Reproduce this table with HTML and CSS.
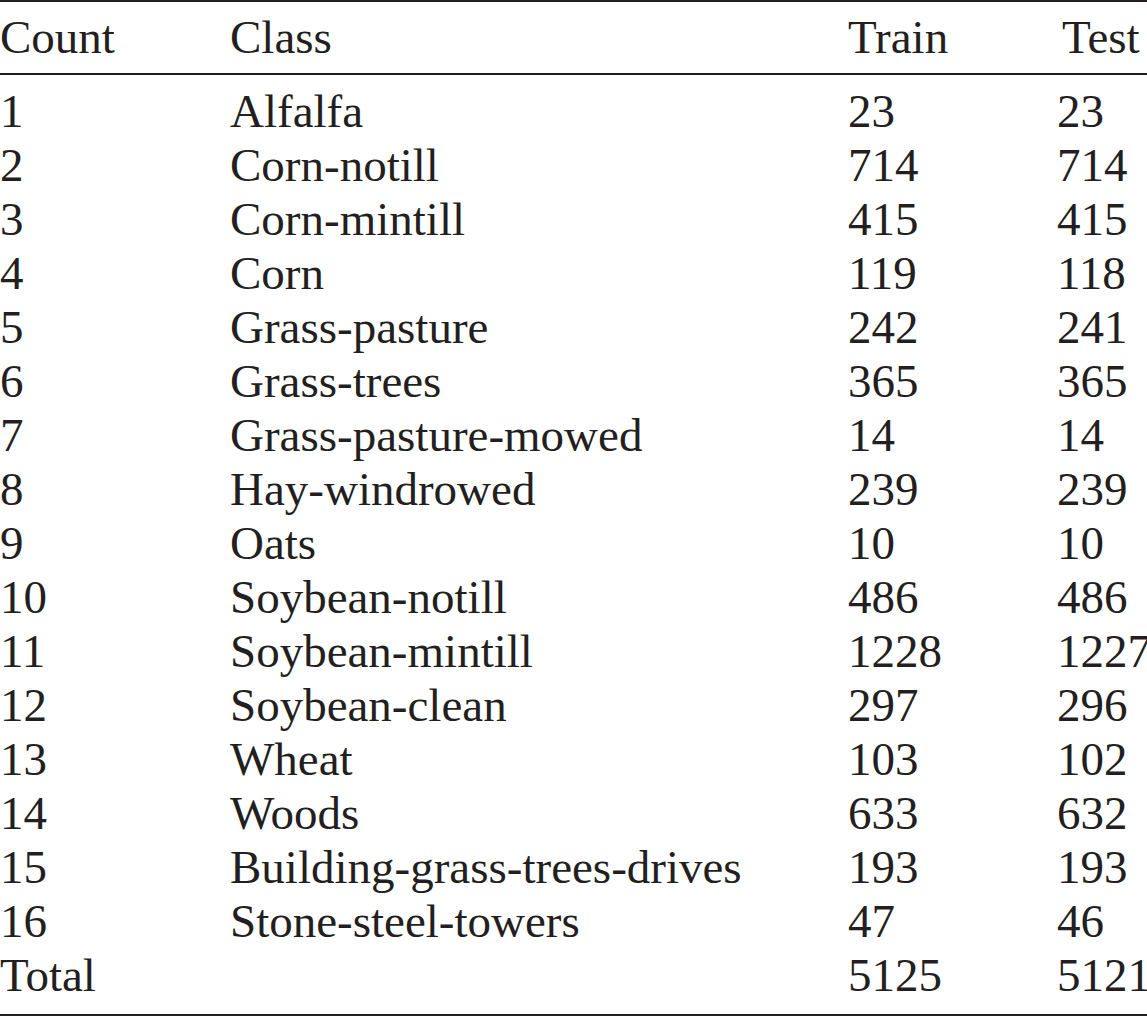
FILE: index.html
```html
<!DOCTYPE html>
<html>
<head>
<meta charset="utf-8">
<link rel="stylesheet" href="styles.css">
</head>
<body>
<table class="data">
  <colgroup>
    <col class="c-count">
    <col class="c-class">
    <col class="c-train">
    <col class="c-test">
  </colgroup>
  <thead>
    <tr><th>Count</th><th>Class</th><th>Train</th><th class="test-head">Test</th></tr>
  </thead>
  <tbody>
    <tr><td>1</td><td>Alfalfa</td><td>23</td><td>23</td></tr>
    <tr><td>2</td><td>Corn-notill</td><td>714</td><td>714</td></tr>
    <tr><td>3</td><td>Corn-mintill</td><td>415</td><td>415</td></tr>
    <tr><td>4</td><td>Corn</td><td>119</td><td>118</td></tr>
    <tr><td>5</td><td>Grass-pasture</td><td>242</td><td>241</td></tr>
    <tr><td>6</td><td>Grass-trees</td><td>365</td><td>365</td></tr>
    <tr><td>7</td><td>Grass-pasture-mowed</td><td>14</td><td>14</td></tr>
    <tr><td>8</td><td>Hay-windrowed</td><td>239</td><td>239</td></tr>
    <tr><td>9</td><td>Oats</td><td>10</td><td>10</td></tr>
    <tr><td>10</td><td>Soybean-notill</td><td>486</td><td>486</td></tr>
    <tr><td>11</td><td>Soybean-mintill</td><td>1228</td><td>1227</td></tr>
    <tr><td>12</td><td>Soybean-clean</td><td>297</td><td>296</td></tr>
    <tr><td>13</td><td>Wheat</td><td>103</td><td>102</td></tr>
    <tr><td>14</td><td>Woods</td><td>633</td><td>632</td></tr>
    <tr><td>15</td><td>Building-grass-trees-drives</td><td>193</td><td>193</td></tr>
    <tr><td>16</td><td>Stone-steel-towers</td><td>47</td><td>46</td></tr>
    <tr><td>Total</td><td></td><td>5125</td><td>5121</td></tr>
  </tbody>
</table>
</body>
</html>
```
FILE: styles.css
```css
html, body {
  margin: 0;
  padding: 0;
  background: #ffffff;
}

body {
  width: 1147px;
  height: 1017px;
  overflow: hidden;
}

.data {
  width: 1147px;
  table-layout: fixed;
  border-collapse: separate;
  border-spacing: 0;
  font-family: "Liberation Serif", "Times New Roman", serif;
  font-size: 47px;
  line-height: 54px;
  color: #231f20;
}

.c-count { width: 230px; }
.c-class { width: 618px; }
.c-train { width: 209px; }
.c-test { width: 90px; }

.data th,
.data td {
  padding: 0;
  text-align: left;
  font-weight: normal;
  white-space: nowrap;
  vertical-align: baseline;
  overflow: visible;
}

.data thead th {
  border-top: 2px solid #231f20;
  border-bottom: 2px solid #231f20;
  padding-top: 8px;
  padding-bottom: 9px;
}

.data thead th.test-head {
  padding-left: 5px;
}

.data tbody tr:first-child td {
  padding-top: 9px;
}

.data tbody tr:last-child td {
  padding-bottom: 12px;
  border-bottom: 2px solid #231f20;
}
```
